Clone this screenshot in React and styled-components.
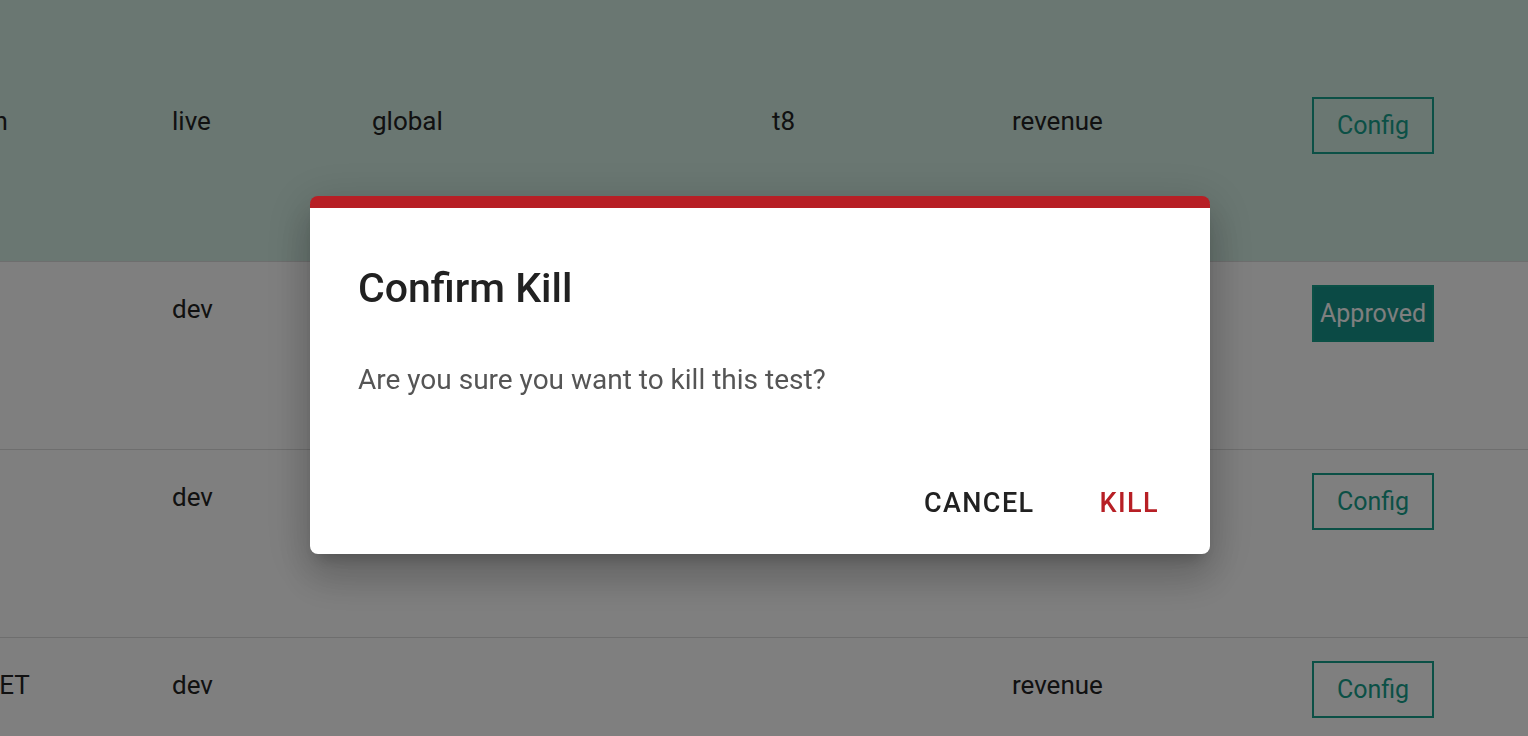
import React from "react"
import styled, { createGlobalStyle } from "styled-components"

const GlobalStyle = createGlobalStyle`
  html, body {
    margin: 0;
    padding: 0;
    background: #ffffff;
    font-family: Roboto, "Liberation Sans", sans-serif;
  }
`

const Viewport = styled.div`
  width: 1528px;
  height: 736px;
  overflow: hidden;
  position: relative;
`

const Table = styled.div`
  margin-left: -205px;
  width: 1760px;
`

const Spacer = styled.div`
  height: 74px;
  background: #d4eee4;
`

const Row = styled.div`
  display: grid;
  grid-template-columns: 377px 200px 400px 240px 300px 1fr;
  align-items: start;
  height: 188px;
  padding-top: 23px;
  box-sizing: border-box;
  border-bottom: 1px solid #dcdcdc;
  background: ${(p) => (p.$selected ? "#d4eee4" : "#ffffff")};
  color: #222222;
  font-size: 26px;
`

const Cell = styled.div`
  line-height: 30px;
  padding-top: 9px;
  white-space: nowrap;
`

const NameCell = styled(Cell)`
  padding-left: 24px;
`

const ActionButton = styled.button`
  width: 122px;
  height: 57px;
  box-sizing: border-box;
  font-family: Roboto, "Liberation Sans", sans-serif;
  font-size: 25px;
  border: 2px solid #17a08c;
  background: ${(p) => (p.$filled ? "#17948a" : "transparent")};
  color: ${(p) => (p.$filled ? "#ffffff" : "#17a08c")};
  padding: 0;
  cursor: pointer;
`

const Overlay = styled.div`
  position: fixed;
  inset: 0;
  background: rgba(0, 0, 0, 0.5);
  display: flex;
  align-items: center;
  justify-content: center;
  padding-right: 8px;
`

const Dialog = styled.div`
  width: 900px;
  height: 358px;
  margin-top: 14px;
  box-sizing: border-box;
  background: #ffffff;
  border-top: 12px solid #b71f25;
  border-radius: 8px;
  box-shadow: 0 11px 15px -7px rgba(0, 0, 0, 0.2), 0 24px 38px 3px rgba(0, 0, 0, 0.14),
    0 9px 46px 8px rgba(0, 0, 0, 0.12);
  display: flex;
  flex-direction: column;
  padding: 0 51px 0 48px;
`

const Title = styled.h2`
  margin: 57px 0 0;
  font-size: 41px;
  font-weight: 500;
  line-height: 46px;
  color: #212121;
`

const Message = styled.p`
  margin: 52px 0 0;
  font-size: 28px;
  line-height: 34px;
  color: #555555;
`

const Actions = styled.div`
  display: flex;
  justify-content: flex-end;
  gap: 65px;
  margin-top: auto;
  margin-bottom: 35px;
`

const TextButton = styled.button`
  border: 0;
  background: none;
  padding: 0;
  font-family: Roboto, "Liberation Sans", sans-serif;
  font-size: 27px;
  font-weight: 500;
  letter-spacing: 1.4px;
  text-transform: uppercase;
  color: ${(p) => (p.$danger ? "#b71f25" : "#212121")};
  cursor: pointer;
`

const rows = [
  { name: "signup_redesign", env: "live", scope: "global", group: "t8", metric: "revenue", approved: false, selected: true },
  { name: "", env: "dev", scope: "", group: "", metric: "", approved: true },
  { name: "", env: "dev", scope: "", group: "", metric: "", approved: false },
  { name: "SIDEBAR_WIDGET", env: "dev", scope: "", group: "", metric: "revenue", approved: false },
]

export default function App() {
  return (
    <Viewport>
      <GlobalStyle />
      <Table>
        <Spacer />
        {rows.map((r, i) => (
          <Row key={i} $selected={r.selected}>
            <NameCell>{r.name}</NameCell>
            <Cell>{r.env}</Cell>
            <Cell>{r.scope}</Cell>
            <Cell>{r.group}</Cell>
            <Cell>{r.metric}</Cell>
            <div>
              <ActionButton $filled={r.approved}>{r.approved ? "Approved" : "Config"}</ActionButton>
            </div>
          </Row>
        ))}
      </Table>
      <Overlay>
        <Dialog>
          <Title>Confirm Kill</Title>
          <Message>Are you sure you want to kill this test?</Message>
          <Actions>
            <TextButton>Cancel</TextButton>
            <TextButton $danger>Kill</TextButton>
          </Actions>
        </Dialog>
      </Overlay>
    </Viewport>
  )
}
